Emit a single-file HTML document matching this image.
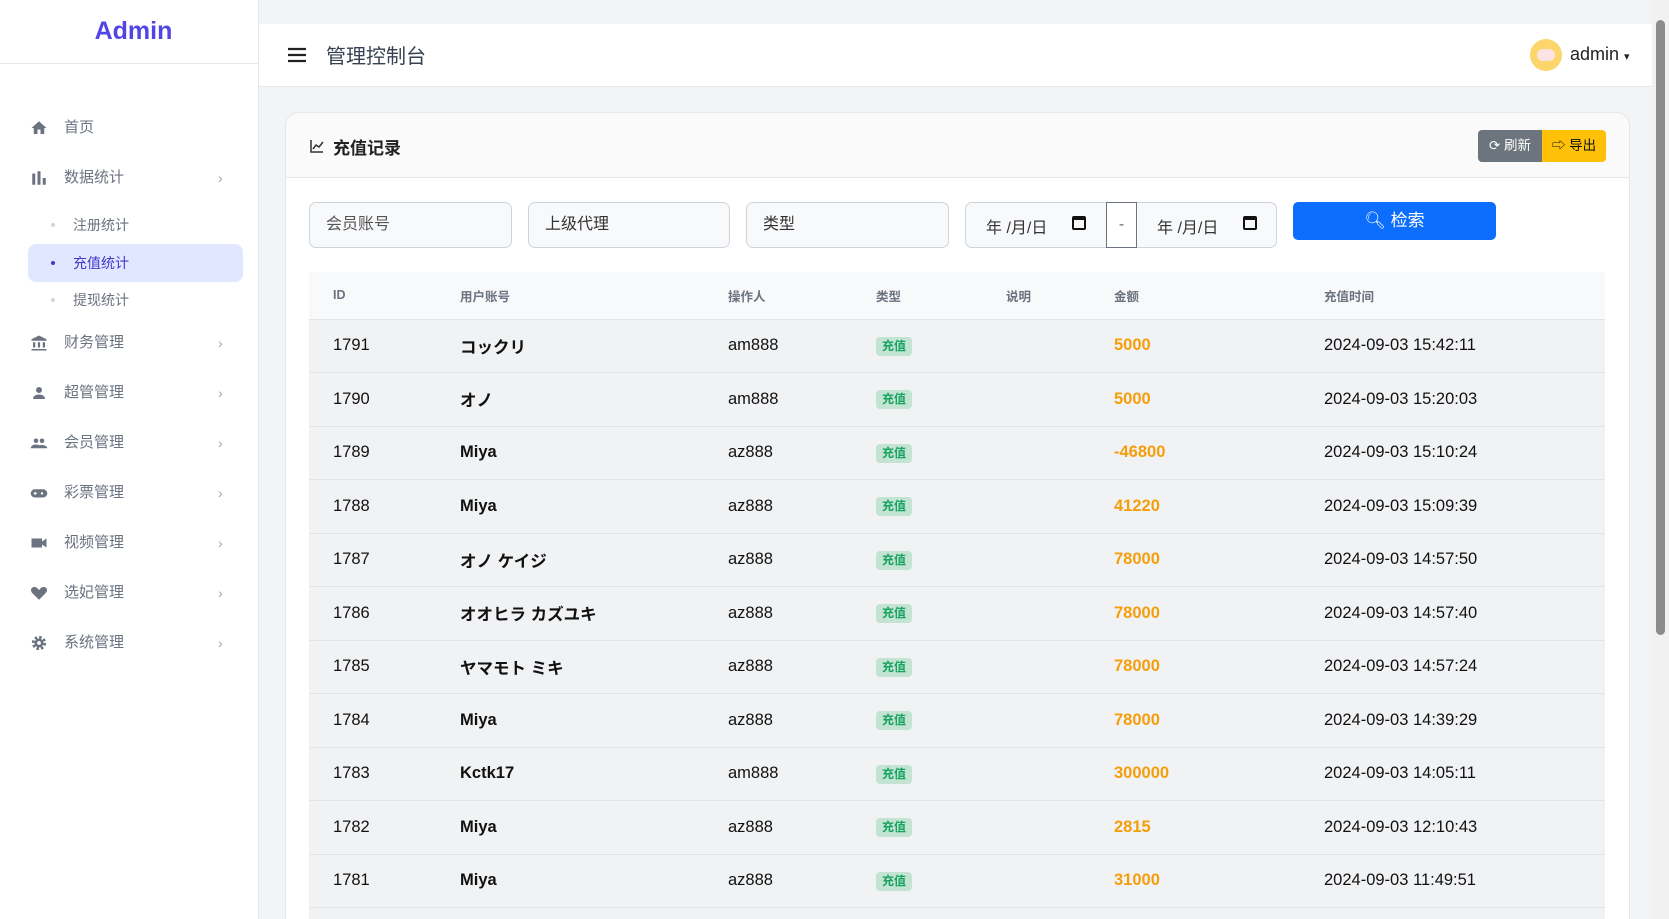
<!DOCTYPE html>
<html style="overflow:hidden;height:919px"><head><meta charset="utf-8"><style>
*{box-sizing:border-box;margin:0;padding:0}
html,body{width:1669px;height:919px;overflow:hidden}
body{background:#f3f4f6;font-family:"Liberation Sans","Noto Sans CJK SC",sans-serif;color:#1f2937}
#wrap{position:relative;width:1669px;height:919px;overflow:hidden}
.abs{position:absolute}
#side{left:0;top:0;width:259px;height:919px;background:#fff;border-right:1px solid #e5e7eb}
.logo{left:4px;width:259px;top:17px;text-align:center;font-size:25px;font-weight:bold;color:#4f46e5}
.nav{left:0;width:259px;height:40px;font-size:15px;color:#6b7280;line-height:40px}
.nav .ic{position:absolute;left:30px;top:11px;width:18px;height:18px}
.nav .t{position:absolute;left:64px}
.nav .ch{position:absolute;left:218px;top:0;font-size:14px;color:#9ca3af}
.sub{left:28px;width:215px;height:38px;line-height:38px;font-size:14px;color:#6b7280;border-radius:8px}
.sub .d{position:absolute;left:23px;top:17px;width:4px;height:4px;border-radius:2px;background:#d1d5db}
.sub .t{position:absolute;left:45px}
#hdr{left:259px;top:24px;width:1393px;height:63px;background:#fff;border-bottom:1px solid #e5e7eb}
#card{left:285px;top:112px;width:1345px;height:830px;background:#fff;border:1px solid #e5e7eb;border-radius:14px;overflow:hidden}
.inp{top:202px;height:46px;border:1px solid #cfd4da;border-radius:7px;background:#f8f9fb;font-size:16px;color:#555;line-height:44px;padding-left:16px}
table{border-collapse:collapse;position:absolute;left:309px;top:272px;width:1296px}
th{height:47px;background:#f8f9fa;font-size:12.5px;color:#6b7280;text-align:left;font-weight:bold;border-bottom:1px solid #e2e4e8}
td{height:53.5px;background:#f1f2f4;font-size:16.5px;color:#111;border-bottom:1px solid #e2e4e8}
td.n{font-weight:bold}
td.a{color:#f59e0b;font-weight:bold}
.tag{display:inline-block;background:#c3e3d3;color:#17a35f;font-size:12px;font-weight:bold;padding:2px 6px;border-radius:4px;line-height:15px}
#sb{left:1652px;top:0;width:17px;height:919px;background:#f1f1f1}
</style></head><body><div id="wrap">
<div id="side" class="abs">
<div class="abs logo">Admin</div>
<div class="abs" style="left:0;top:63px;width:259px;border-top:1px solid #e5e7eb"></div>
<div class="abs nav" style="top:108px"><svg class="ic" viewBox="0 0 24 24"><path fill="#6b7280" d="M10 20v-6h4v6h5v-8h3L12 3 2 12h3v8z"/></svg><span class="t">首页</span></div>
<div class="abs nav" style="top:158px"><svg class="ic" viewBox="0 0 24 24"><path fill="#6b7280" d="M3 6h4v15H3zM10 3h4v18h-4zM17 12h4v9h-4z"/></svg><span class="t">数据统计</span><span class="ch">›</span></div>
<div class="abs sub" style="top:206px"><span class="d"></span><span class="t">注册统计</span></div>
<div class="abs sub" style="top:244px;background:#e0e7ff;color:#4338ca"><span class="d" style="background:#4338ca"></span><span class="t">充值统计</span></div>
<div class="abs sub" style="top:281px"><span class="d"></span><span class="t">提现统计</span></div>
<div class="abs nav" style="top:323px"><svg class="ic" viewBox="0 0 24 24"><path fill="#6b7280" d="M12 2 2 7v2h20V7zM4 11h3v7H4zM10.5 11h3v7h-3zM17 11h3v7h-3zM2 20h20v2H2z"/></svg><span class="t">财务管理</span><span class="ch">›</span></div>
<div class="abs nav" style="top:373px"><svg class="ic" viewBox="0 0 24 24"><circle cx="12" cy="8" r="4" fill="#6b7280"/><path fill="#6b7280" d="M4 20c0-4 4-6 8-6s8 2 8 6z"/></svg><span class="t">超管管理</span><span class="ch">›</span></div>
<div class="abs nav" style="top:423px"><svg class="ic" viewBox="0 0 24 24"><circle cx="8" cy="9" r="3" fill="#6b7280"/><circle cx="16" cy="9" r="3" fill="#6b7280"/><path fill="#6b7280" d="M1 19c0-3 3-5 7-5s7 2 7 5zM13 19c0-2 0-3-1-4 4-1 11 0 11 4z"/></svg><span class="t">会员管理</span><span class="ch">›</span></div>
<div class="abs nav" style="top:473px"><svg class="ic" viewBox="0 0 24 24"><rect x="1" y="7" width="22" height="11" rx="5.5" fill="#6b7280"/><circle cx="16" cy="12.5" r="1.6" fill="#fff"/><path stroke="#fff" stroke-width="1.6" d="M5 12.5h4M7 10.5v4"/></svg><span class="t">彩票管理</span><span class="ch">›</span></div>
<div class="abs nav" style="top:523px"><svg class="ic" viewBox="0 0 24 24"><path fill="#6b7280" d="M2 6h14v12H2zM16 10l6-4v12l-6-4z"/></svg><span class="t">视频管理</span><span class="ch">›</span></div>
<div class="abs nav" style="top:573px"><svg class="ic" viewBox="0 0 24 24"><path fill="#6b7280" d="M12 21 3 12C0 9 1 4 6 4c3 0 4 2 6 4 2-2 3-4 6-4 5 0 6 5 3 8z"/></svg><span class="t">选妃管理</span><span class="ch">›</span></div>
<div class="abs nav" style="top:623px"><svg class="ic" viewBox="0 0 24 24"><circle cx="12" cy="12" r="7" fill="none" stroke="#6b7280" stroke-width="5" stroke-dasharray="3 2.5"/><circle cx="12" cy="12" r="6" fill="#6b7280"/><circle cx="12" cy="12" r="2.5" fill="#fff"/></svg><span class="t">系统管理</span><span class="ch">›</span></div>
</div>
<div id="hdr" class="abs">
<svg class="abs" style="left:28px;top:23px" width="20" height="16" viewBox="0 0 20 16"><path stroke="#222" stroke-width="2.2" d="M1 2h18M1 8h18M1 14h18"/></svg>
<div class="abs" style="left:67px;top:16px;font-size:20px;color:#374151">管理控制台</div>
<div class="abs" style="left:1271px;top:15px;width:32px;height:32px;border-radius:16px;background:#fcd66b"><div style="margin:10px 7px;width:18px;height:12px;border-radius:6px;background:#fbe3e3"></div></div>
<div class="abs" style="left:1311px;top:20px;font-size:18px;color:#222">admin <span style="font-size:11px">▾</span></div>
</div>
<div id="card" class="abs">
<div class="abs" style="left:0;top:0;width:1345px;height:65px;background:#fafafa;border-bottom:1px solid #e5e7eb"></div>
<svg class="abs" style="left:24px;top:26px" width="14" height="14" viewBox="0 0 14 14"><path fill="none" stroke="#333" stroke-width="1.5" d="M1 1v12h12M3 10l3-4 3 2 4-5"/></svg>
<div class="abs" style="left:47px;top:21px;font-size:17px;font-weight:bold;color:#222">充值记录</div>
<div class="abs" style="left:1192px;top:17px;width:64px;height:32px;background:#6c757d;border-radius:4px 0 0 4px;color:#fff;font-size:13.5px;line-height:32px;text-align:center">⟳ 刷新</div>
<div class="abs" style="left:1256px;top:17px;width:64px;height:32px;background:#ffc107;border-radius:0 4px 4px 0;color:#111;font-size:13.5px;line-height:32px;text-align:center">⇨ 导出</div>
</div>
<div class="abs inp" style="left:309px;width:203px">会员账号</div>
<div class="abs inp" style="left:528px;width:202px;color:#333">上级代理</div>
<div class="abs inp" style="left:746px;width:203px;color:#333">类型</div>
<div class="abs inp" style="left:965px;width:312px;padding:0"></div>
<div class="abs" style="left:986px;top:214px;font-size:16px;color:#333">年 /月/日</div>
<div class="abs" style="left:1072px;top:216px;width:14px;height:14px;border:2px solid #111;border-top-width:4px;border-radius:2px"></div>
<div class="abs" style="left:1106px;top:202px;width:31px;height:46px;background:#fff;border:1px solid #6b7280;text-align:center;line-height:44px;color:#666">-</div>
<div class="abs" style="left:1157px;top:214px;font-size:16px;color:#333">年 /月/日</div>
<div class="abs" style="left:1243px;top:216px;width:14px;height:14px;border:2px solid #111;border-top-width:4px;border-radius:2px"></div>
<div class="abs" style="left:1293px;top:202px;width:203px;height:38px;background:#0d6efd;border-radius:5px;color:#fff;font-size:17px;text-align:center;line-height:38px">🔍︎ 检索</div>
<table>
<tr><th style="padding-left:24px;width:151px">ID</th><th style="width:268px">用户账号</th><th style="width:148px">操作人</th><th style="width:130px">类型</th><th style="width:108px">说明</th><th style="width:210px">金额</th><th>充值时间</th></tr>
<tr><td style="padding-left:24px">1791</td><td class="n">コックリ</td><td>am888</td><td><span class="tag">充值</span></td><td></td><td class="a">5000</td><td>2024-09-03 15:42:11</td></tr>
<tr><td style="padding-left:24px">1790</td><td class="n">オノ</td><td>am888</td><td><span class="tag">充值</span></td><td></td><td class="a">5000</td><td>2024-09-03 15:20:03</td></tr>
<tr><td style="padding-left:24px">1789</td><td class="n">Miya</td><td>az888</td><td><span class="tag">充值</span></td><td></td><td class="a">-46800</td><td>2024-09-03 15:10:24</td></tr>
<tr><td style="padding-left:24px">1788</td><td class="n">Miya</td><td>az888</td><td><span class="tag">充值</span></td><td></td><td class="a">41220</td><td>2024-09-03 15:09:39</td></tr>
<tr><td style="padding-left:24px">1787</td><td class="n">オノ ケイジ</td><td>az888</td><td><span class="tag">充值</span></td><td></td><td class="a">78000</td><td>2024-09-03 14:57:50</td></tr>
<tr><td style="padding-left:24px">1786</td><td class="n">オオヒラ カズユキ</td><td>az888</td><td><span class="tag">充值</span></td><td></td><td class="a">78000</td><td>2024-09-03 14:57:40</td></tr>
<tr><td style="padding-left:24px">1785</td><td class="n">ヤマモト ミキ</td><td>az888</td><td><span class="tag">充值</span></td><td></td><td class="a">78000</td><td>2024-09-03 14:57:24</td></tr>
<tr><td style="padding-left:24px">1784</td><td class="n">Miya</td><td>az888</td><td><span class="tag">充值</span></td><td></td><td class="a">78000</td><td>2024-09-03 14:39:29</td></tr>
<tr><td style="padding-left:24px">1783</td><td class="n">Kctk17</td><td>am888</td><td><span class="tag">充值</span></td><td></td><td class="a">300000</td><td>2024-09-03 14:05:11</td></tr>
<tr><td style="padding-left:24px">1782</td><td class="n">Miya</td><td>az888</td><td><span class="tag">充值</span></td><td></td><td class="a">2815</td><td>2024-09-03 12:10:43</td></tr>
<tr><td style="padding-left:24px">1781</td><td class="n">Miya</td><td>az888</td><td><span class="tag">充值</span></td><td></td><td class="a">31000</td><td>2024-09-03 11:49:51</td></tr>
<tr><td style="padding-left:24px">1780</td><td class="n">Miya</td><td>az888</td><td><span class="tag">充值</span></td><td></td><td class="a">1000</td><td>2024-09-03 11:40:00</td></tr>
</table>
<div id="sb" class="abs"><div class="abs" style="left:4px;top:20px;width:9px;height:615px;background:#8c8c8c;border-radius:5px"></div></div>
</div></body></html>
